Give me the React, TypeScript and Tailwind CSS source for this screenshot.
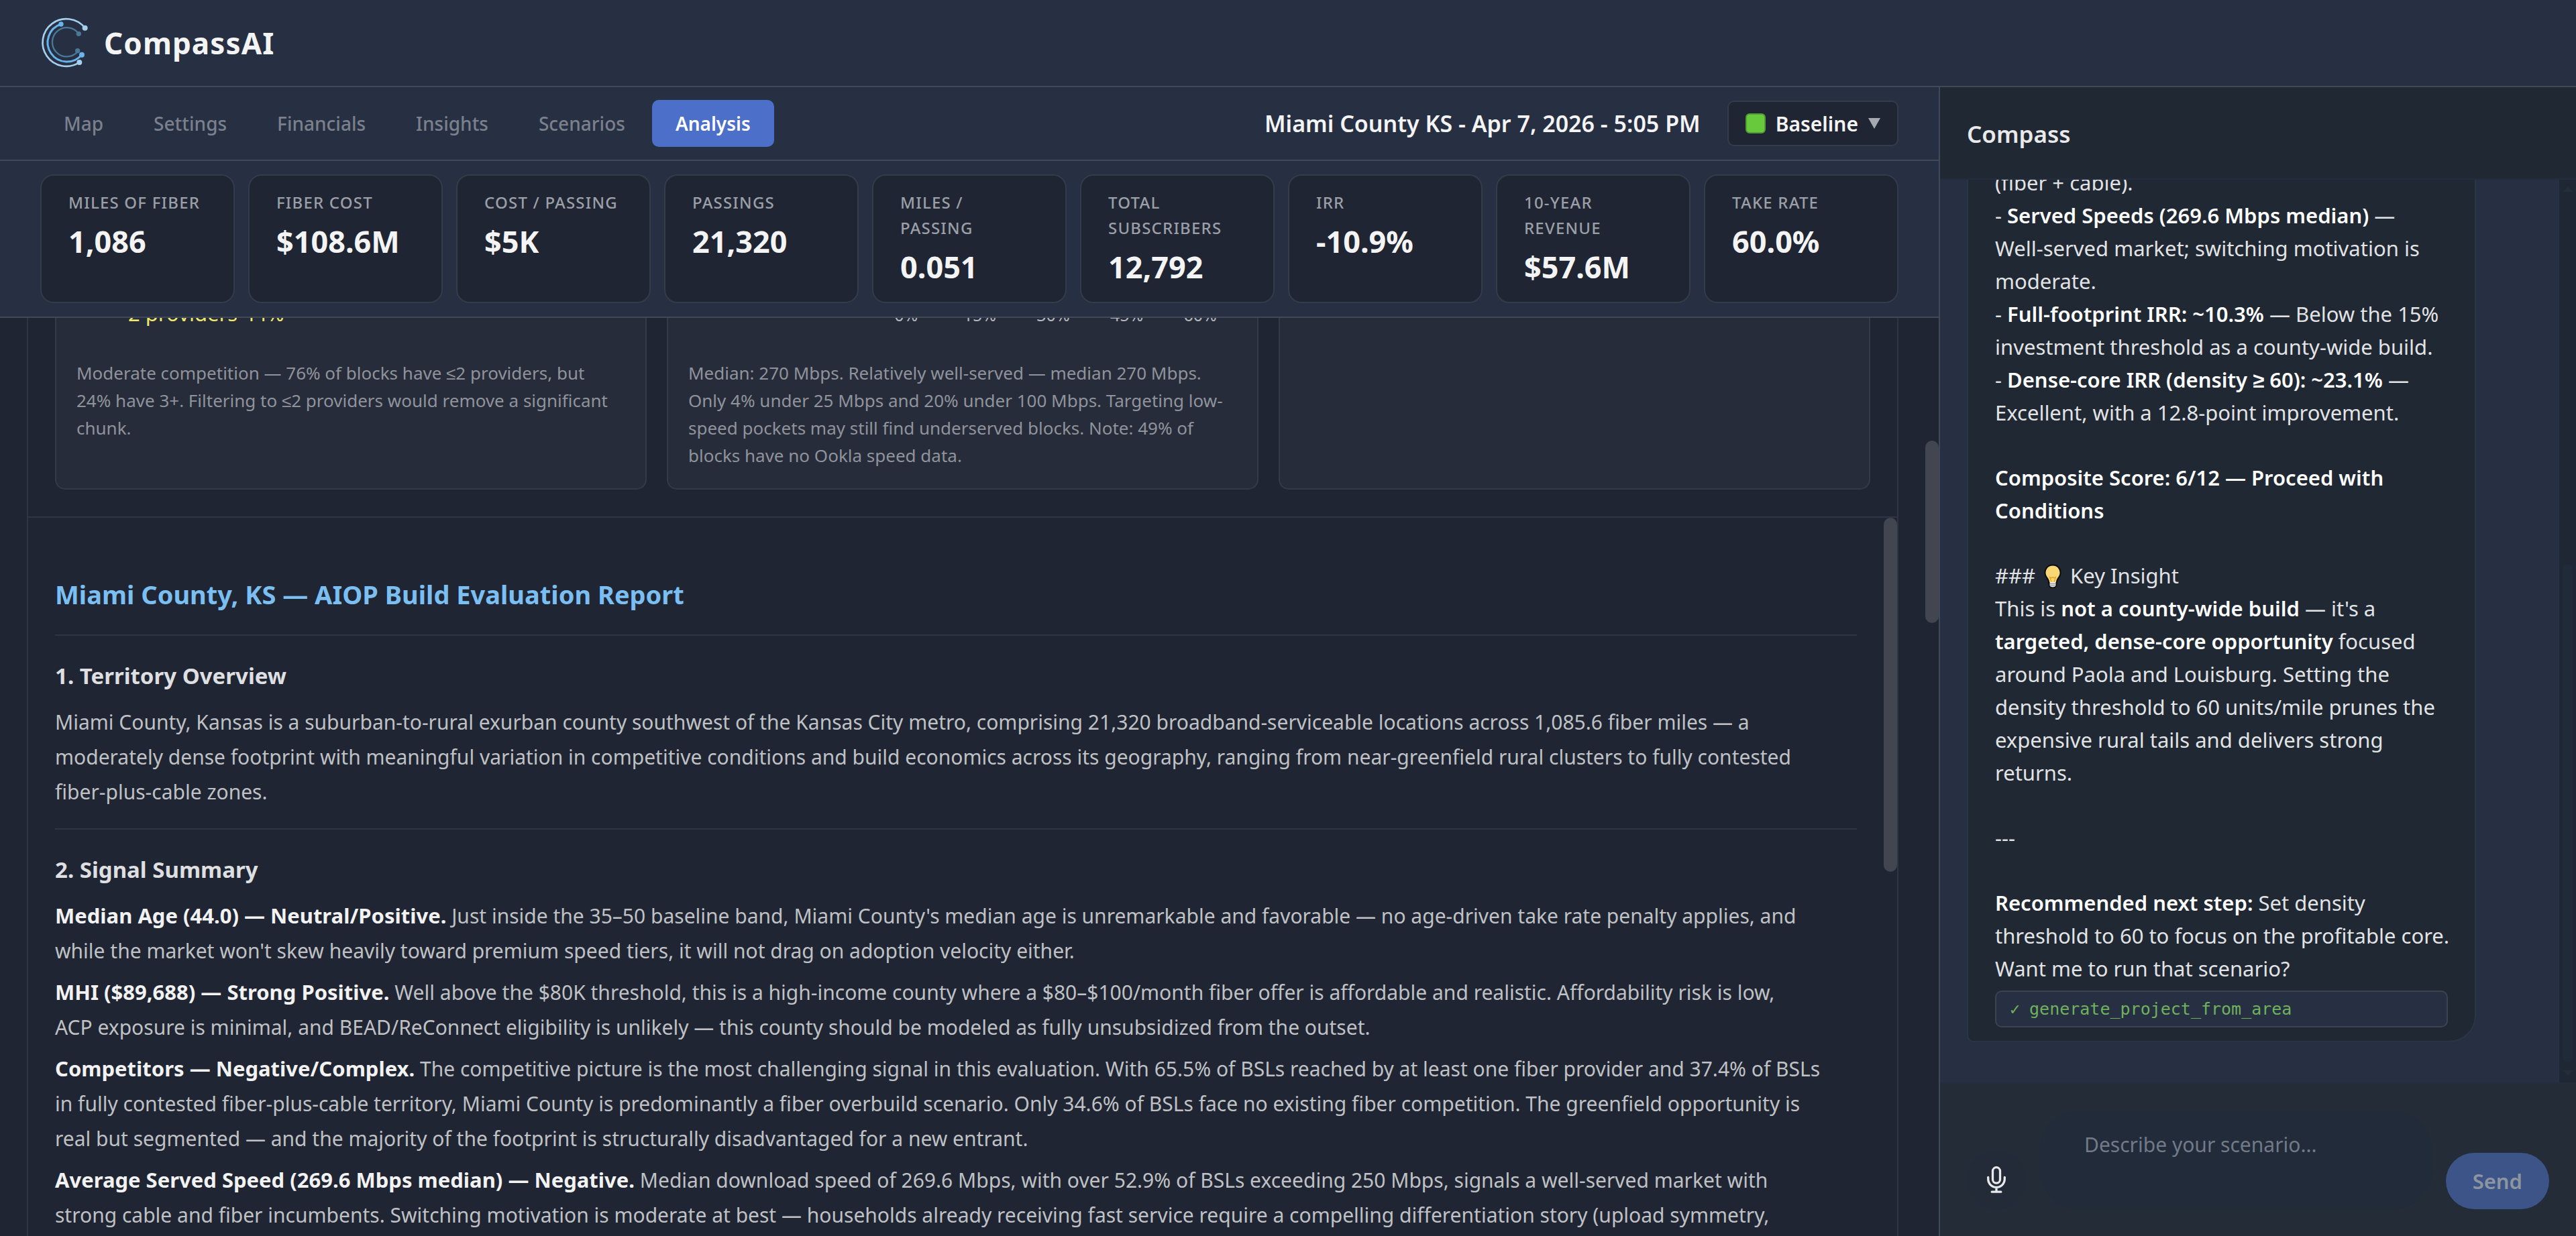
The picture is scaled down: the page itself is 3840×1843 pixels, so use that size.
import React from "react";

const tabs = ["Map", "Settings", "Financials", "Insights", "Scenarios", "Analysis"];

const metrics = [
  { label: "Miles of fiber", value: "1,086" },
  { label: "Fiber cost", value: "$108.6M" },
  { label: "Cost / passing", value: "$5K" },
  { label: "Passings", value: "21,320" },
  { label: "Miles / passing", value: "0.051" },
  { label: "Total subscribers", value: "12,792" },
  { label: "IRR", value: "-10.9%" },
  { label: "10-year revenue", value: "$57.6M" },
  { label: "Take rate", value: "60.0%" },
];

const signals = [
  {
    title: "Median Age (44.0) — Neutral/Positive.",
    lines: [
      "Just inside the 35–50 baseline band, Miami County's median age is unremarkable and favorable — no age-driven take rate penalty applies, and",
      "while the market won't skew heavily toward premium speed tiers, it will not drag on adoption velocity either.",
    ],
  },
  {
    title: "MHI ($89,688) — Strong Positive.",
    lines: [
      "Well above the $80K threshold, this is a high-income county where a $80–$100/month fiber offer is affordable and realistic. Affordability risk is low,",
      "ACP exposure is minimal, and BEAD/ReConnect eligibility is unlikely — this county should be modeled as fully unsubsidized from the outset.",
    ],
  },
  {
    title: "Competitors — Negative/Complex.",
    lines: [
      "The competitive picture is the most challenging signal in this evaluation. With 65.5% of BSLs reached by at least one fiber provider and 37.4% of BSLs",
      "in fully contested fiber-plus-cable territory, Miami County is predominantly a fiber overbuild scenario. Only 34.6% of BSLs face no existing fiber competition. The greenfield opportunity is",
      "real but segmented — and the majority of the footprint is structurally disadvantaged for a new entrant.",
    ],
  },
  {
    title: "Average Served Speed (269.6 Mbps median) — Negative.",
    lines: [
      "Median download speed of 269.6 Mbps, with over 52.9% of BSLs exceeding 250 Mbps, signals a well-served market with",
      "strong cable and fiber incumbents. Switching motivation is moderate at best — households already receiving fast service require a compelling differentiation story (upload symmetry,",
    ],
  },
];

function Logo() {
  return (
    <svg viewBox="60 42 240 240" className="size-20" fill="none" strokeLinecap="round" aria-hidden="true">
      <g stroke="#4a7896" fill="#4a7896">
        <path d="M232 121A65 65 0 1 0 227 202" strokeWidth="7" fill="none" />
        <circle cx="232" cy="121" r="11" stroke="none" />
        <circle cx="227" cy="197" r="11" stroke="none" />
      </g>
      <g stroke="#6ab4ec" fill="#6ab4ec">
        <path d="M153 78A86 86 0 1 0 246 214" strokeWidth="9" fill="none" />
        <circle cx="153" cy="78" r="11" stroke="none" />
        <circle cx="246" cy="215" r="12" stroke="none" />
      </g>
      <g stroke="#a6cfee" fill="#a6cfee">
        <path d="M260 95A106 106 0 1 0 235 249" strokeWidth="8" fill="none" />
        <circle cx="260" cy="95" r="12" stroke="none" />
        <circle cx="235" cy="249" r="12" stroke="none" />
      </g>
    </svg>
  );
}

function Bulb() {
  return (
    <svg viewBox="0 0 36 40" className="mx-2 inline-block h-10 w-9 align-[-9px]" role="img" aria-label="Idea">
      <path
        d="M18 2.500C10.500 2.500 5.500 8 5.500 15c0 5.500 3.500 8 5 11.500.7 1.700.8 3.500 1 6 .2 3.500 2.500 5.500 6.500 5.500s6.300-2 6.500-5.500c.2-2.500.3-4.300 1-6 1.500-3.500 5-6 5-11.500 0-7-5-12.500-12.500-12.500z"
        fill="#0b0b0b"
      />
      <path
        d="M18 4.500c-6.300 0-10.500 4.700-10.500 10.500 0 4.800 3.300 7 4.700 10.500.5 1.200.8 2.500.9 3.500h9.800c.1-1 .4-2.300.9-3.500 1.400-3.500 4.700-5.700 4.700-10.500C28.500 9.200 24.300 4.500 18 4.500z"
        fill="#f8d775"
      />
      <path d="M16 28.500l-2.500-7 2.500 1.500 2-1.500 2 1.500 2.500-1.500-2.500 7" fill="none" stroke="#e0a31d" strokeWidth="1.200" />
      <path d="M13.500 29h9v4.500c0 2-2 3-4.500 3s-4.500-1-4.500-3z" fill="#e4e4e4" />
      <path d="M13.500 31.500h9M13.500 34h9" stroke="#8f8f8f" strokeWidth="1" />
    </svg>
  );
}

function Lines({ lines }: { lines: string[] }) {
  return (
    <>
      {lines.map((line, i) => (
        <React.Fragment key={line}>
          {i > 0 && <br />}
          {line}
        </React.Fragment>
      ))}
    </>
  );
}

function ChartCard({ children }: { children?: React.ReactNode }) {
  return (
    <article className="rounded-b-[15px] border-2 border-t-0 border-[#333b48] bg-[#272c3a] px-[30px] pb-7">{children}</article>
  );
}

function Report() {
  return (
    <section className="relative flex-1 border-t-2 border-[#2e3644] pr-[60px] pl-10 pt-[84px]">
      <h1 className="pb-[30px] text-[38px] leading-[60px] font-bold text-[#7bbff2]">
        Miami County, KS — AIOP Build Evaluation Report
      </h1>
      <hr className="border-t-2 border-[#2e3644]" />
      <h2 className="mt-[34px] text-[33px] leading-[52px] font-bold text-[#dedfe1]">1. Territory Overview</h2>
      <p className="mt-[17px] text-[30px] leading-[52px] text-[#bfc1c5]">
        <Lines
          lines={[
            "Miami County, Kansas is a suburban-to-rural exurban county southwest of the Kansas City metro, comprising 21,320 broadband-serviceable locations across 1,085.6 fiber miles — a",
            "moderately dense footprint with meaningful variation in competitive conditions and build economics across its geography, ranging from near-greenfield rural clusters to fully contested",
            "fiber-plus-cable zones.",
          ]}
        />
      </p>
      <hr className="mt-[28px] border-t-2 border-[#2e3644]" />
      <h2 className="mt-[34px] mb-[17px] text-[33px] leading-[52px] font-bold text-[#dedfe1]">2. Signal Summary</h2>
      {signals.map((s) => (
        <p key={s.title} className="mb-2.5 text-[30px] leading-[52px] text-[#bfc1c5]">
          <strong className="text-[31px] leading-none font-bold text-[#f2f2f3]">{s.title}</strong> <Lines lines={s.lines} />
        </p>
      ))}
      <div className="absolute top-0 right-0 h-[528px] w-5 rounded-full bg-[#424650]" />
    </section>
  );
}

function B({ children }: { children: React.ReactNode }) {
  return <strong className="font-semibold text-white">{children}</strong>;
}

function Sidebar() {
  return (
    <aside className="flex w-[950px] shrink-0 flex-col border-l-2 border-[#414958] bg-[#272f42]">
      <header className="border-b-2 border-[#242d3b] bg-[#1f2833] px-10 pt-[42px] pb-[38px]">
        <h2 className="text-[35px] leading-[56px] font-semibold text-[#e9e9ea]">Compass</h2>
      </header>
      <div className="relative flex min-h-0 flex-1 flex-col justify-end overflow-hidden pr-[65px] pb-[60px] pl-10">
        <div className="w-[90%] rounded-br-[40px] rounded-bl-[10px] border-2 border-[#2c3543] bg-[#1f2833] px-10 pb-5">
          <div className="flex flex-col gap-12 text-[31px] leading-[49px] whitespace-nowrap text-[#e2e3e5]">
            <p>
              (fiber + cable).
              <br />- <B>Served Speeds (269.6 Mbps median)</B> —
              <br />
              Well-served market; switching motivation is
              <br />
              moderate.
              <br />- <B>Full-footprint IRR: ~10.3%</B> — Below the 15%
              <br />
              investment threshold as a county-wide build.
              <br />- <B>Dense-core IRR (density ≥ 60): ~23.1%</B> —
              <br />
              Excellent, with a 12.8-point improvement.
            </p>
            <p>
              <B>
                Composite Score: 6/12 — Proceed with
                <br />
                Conditions
              </B>
            </p>
            <p>
              ###
              <Bulb />
              Key Insight
              <br />
              This is <B>not a county-wide build</B> — it's a
              <br />
              <B>targeted, dense-core opportunity</B> focused
              <br />
              around Paola and Louisburg. Setting the
              <br />
              density threshold to 60 units/mile prunes the
              <br />
              expensive rural tails and delivers strong
              <br />
              returns.
            </p>
            <p>---</p>
            <p>
              <B>Recommended next step:</B> Set density
              <br />
              threshold to 60 to focus on the profitable core.
              <br />
              Want me to run that scenario?
            </p>
          </div>
          <div className="mt-2 rounded-[10px] border-2 border-[#3b4351] bg-[#272f42] px-5 py-2 font-['DejaVu_Sans_Mono',monospace] text-[25px] leading-[35px] text-[#6fb15d]">
            <span className="mr-3.5">✓</span>generate_project_from_area
          </div>
        </div>
        <div className="absolute inset-y-0 right-0 flex w-[25px] flex-col items-center justify-between bg-[#1f2734] py-2.5">
          <svg viewBox="0 0 14 8" className="h-2 w-3.5" aria-hidden="true">
            <path d="M7 0l7 8H0z" fill="#242d3b" />
          </svg>
          <div className="mt-auto mb-3 h-[56%] w-[15px] rounded-full bg-[#212a39]" />
          <svg viewBox="0 0 14 8" className="h-2 w-3.5" aria-hidden="true">
            <path d="M7 8L0 0h14z" fill="#242d3b" />
          </svg>
        </div>
      </div>
      <form className="flex items-end gap-5 border-t-2 border-[#242d3b] bg-[#232c37] p-10" onSubmit={(e) => e.preventDefault()}>
        <button
          type="button"
          aria-label="Dictate"
          className="flex size-[88px] shrink-0 items-center justify-center rounded-full bg-[#232b39]"
        >
          <svg viewBox="0 0 28 40" className="h-10 w-7" fill="none" stroke="#e8e9eb" strokeWidth="3.300" strokeLinecap="round" aria-hidden="true">
            <rect x="8.500" y="1.700" width="11" height="23.500" rx="5.500" />
            <path d="M1.700 16.300v2.800a12.300 12.300 0 0 0 24.600 0v-2.800M14 32v6M7.200 38.200h13.600" />
          </svg>
        </button>
        <textarea
          aria-label="Describe your scenario"
          placeholder="Describe your scenario..."
          className="h-[147px] min-w-0 flex-1 resize-none rounded-[60px] bg-[#222b3a] px-[67px] pt-[27px] text-[30px] leading-[48px] text-[#e2e3e5] outline-none placeholder:text-[#727a87]"
        />
        <button type="submit" className="h-[84px] shrink-0 rounded-full bg-[#3d5488] px-10 text-[31px] font-semibold text-[#8d95a1]">
          Send
        </button>
      </form>
    </aside>
  );
}

export default function App() {
  return (
    <div className="flex h-screen flex-col overflow-hidden bg-[#1f2532] font-['Noto_Sans',sans-serif]">
      <header className="flex h-[130px] shrink-0 items-center gap-[15px] border-b-2 border-[#414958] bg-[#272f42] px-[60px]">
        <Logo />
        <span className="text-[44px] font-bold tracking-wide text-[#f4f4f5]">CompassAI</span>
      </header>
      <div className="flex min-h-0 flex-1">
        <main className="flex min-w-0 flex-1 flex-col">
          <div className="flex h-[110px] shrink-0 items-center justify-between border-b-2 border-[#414958] bg-[#272f42] px-[60px]">
            <nav className="flex gap-[5px]">
              {tabs.map((t) => (
                <button
                  key={t}
                  type="button"
                  className={
                    t === "Analysis"
                      ? "h-[70px] rounded-[10px] bg-[#4c6fc9] px-[35px] text-[28px] font-semibold text-white"
                      : "h-[70px] rounded-[10px] px-[35px] text-[28px] font-medium text-[#7a808c]"
                  }
                >
                  {t}
                </button>
              ))}
            </nav>
            <div className="flex items-center gap-10">
              <span className="text-[34px] font-semibold text-[#f4f4f5]">Miami County KS - Apr 7, 2026 - 5:05 PM</span>
              <button
                type="button"
                className="flex h-[68px] items-center gap-[15px] rounded-[10px] border-2 border-[#333c49] bg-[#1f2532] px-[25px] text-[30px] font-semibold text-[#f4f4f5]"
              >
                <span className="size-[30px] rounded-[6px] border-2 border-[#519f33] bg-[#67c93b]" />
                Baseline
                <svg viewBox="0 0 18 16" className="h-4 w-[18px]" aria-hidden="true">
                  <path d="M0 0h18L9 16z" fill="#a5a9b0" />
                </svg>
              </button>
            </div>
          </div>
          <dl className="grid shrink-0 grid-cols-9 gap-5 border-b-2 border-[#414958] bg-[#272f42] px-[60px] py-5">
            {metrics.map((m) => (
              <div key={m.label} className="rounded-[20px] border-2 border-[#333c49] bg-[#1f2532] px-10 pt-[21px] pb-[19px]">
                <dt className="text-[24px] leading-[38px] font-medium tracking-wider text-[#9b9fa7] uppercase">{m.label}</dt>
                <dd className="mt-[5px] text-[45px] leading-[67px] font-bold text-[#f4f4f5]">{m.value}</dd>
              </div>
            ))}
          </dl>
          <div className="relative flex min-h-0 flex-1 overflow-hidden pr-[60px] pl-10">
            <div className="flex min-w-0 flex-1 flex-col border-x-2 border-[#2e3644]">
              <div className="-mt-[27px] mb-10 grid shrink-0 grid-cols-3 gap-[30px] px-10">
                <ChartCard>
                  <p className="pl-[77px] text-[31px] leading-10 text-[#f0e96a]">2 providers 44%</p>
                  <p className="mt-[49px] text-[26px] leading-[41px] text-[#8f939b]">
                    <Lines
                      lines={[
                        "Moderate competition — 76% of blocks have ≤2 providers, but",
                        "24% have 3+. Filtering to ≤2 providers would remove a significant",
                        "chunk.",
                      ]}
                    />
                  </p>
                </ChartCard>
                <ChartCard>
                  <div className="flex h-10 pl-[270px] text-[25px] leading-[44px] text-[#b4b7bd]">
                    {["0%", "15%", "30%", "45%", "60%"].map((v) => (
                      <span key={v} className="w-[111px] text-center">
                        {v}
                      </span>
                    ))}
                  </div>
                  <p className="mt-[49px] text-[26px] leading-[41px] text-[#8f939b]">
                    Median: 270 Mbps. Relatively well-served — median 270 Mbps. Only 4% under 25 Mbps and 20% under 100
                    Mbps. Targeting low-speed pockets may still find underserved blocks. Note: 49% of blocks have no
                    Ookla speed data.
                  </p>
                </ChartCard>
                <ChartCard />
              </div>
              <Report />
            </div>
            <div className="absolute top-[183px] right-0 h-[272px] w-5 rounded-full bg-[#424650]" />
          </div>
        </main>
        <Sidebar />
      </div>
    </div>
  );
}
